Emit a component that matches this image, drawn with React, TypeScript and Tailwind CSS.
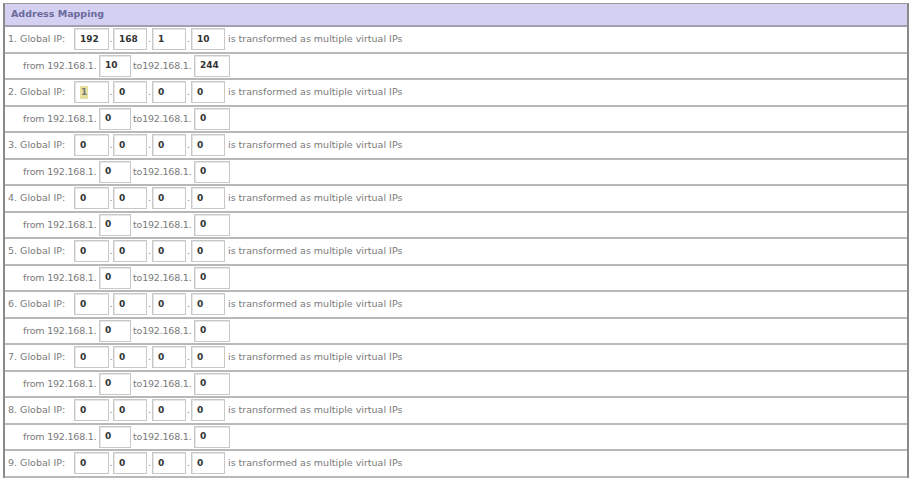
import React from "react";

const font = { fontFamily: '"DejaVu Sans", Verdana, sans-serif' };

function Box({ v, w, hl }: { v: string; w: number; hl?: boolean }) {
  return (
    <div
      className="shrink-0 h-[22px] border border-[#c8c8c8] bg-white shadow-[inset_1px_1px_0_#e6e6e6] flex items-center pl-[5px] text-[9px] font-bold text-[#333]"
      style={{ width: w }}
    >
      {hl ? <span className="bg-[#e8e0a0] text-[#777] px-[1px]">1</span> : v}
    </div>
  );
}

function GlobalRow({ n, vals, hl }: { n: number; vals: string[]; hl?: boolean }) {
  return (
    <div className="h-[26.5px] border-b-2 border-[#b8b8b8] flex items-center whitespace-nowrap pl-[3px] text-[9.5px] text-[#7a7a7a]">
      <span className="shrink-0 w-[66px]">{n}. Global IP:</span>
      <Box v={vals[0]} w={35} hl={hl} />
      <span className="shrink-0 w-[4px] text-center">.</span>
      <Box v={vals[1]} w={34} />
      <span className="shrink-0 w-[5px] text-center">.</span>
      <Box v={vals[2]} w={34} />
      <span className="shrink-0 w-[5px] text-center">.</span>
      <Box v={vals[3]} w={34} />
      <span className="ml-[3px]">is transformed as multiple virtual IPs</span>
    </div>
  );
}

function FromRow({ a, b }: { a: string; b: string }) {
  return (
    <div className="h-[26.5px] border-b-2 border-[#b8b8b8] flex items-center whitespace-nowrap pl-[18px] text-[9.5px] text-[#7a7a7a]">
      <span className="shrink-0 w-[76px] tracking-[-0.2px]">from 192.168.1.</span>
      <Box v={a} w={32} />
      <span className="shrink-0 w-[63px] pl-[2px] tracking-[-0.2px]">to192.168.1.</span>
      <Box v={b} w={36} />
    </div>
  );
}

export default function App() {
  const rows: { vals: string[]; a: string; b: string; hl?: boolean }[] = [
    { vals: ["192", "168", "1", "10"], a: "10", b: "244" },
    { vals: ["1", "0", "0", "0"], a: "0", b: "0", hl: true },
  ];
  for (let i = 0; i < 7; i++) rows.push({ vals: ["0", "0", "0", "0"], a: "0", b: "0" });
  return (
    <div className="w-[912px] h-[500px] bg-white overflow-hidden pt-[3px] pl-[3px]" style={font}>
      <div className="w-[906px] border-l-2 border-t border-r-2 border-l-[#8a8a8a] border-t-[#9a9a9a] border-r-[#8a8a8a]">
        <div className="h-[23px] bg-[#d4d0f2] border-b-2 border-[#a0a0b0] flex items-center pl-[6px] text-[9.5px] font-bold text-[#6a6a9a]">
          Address Mapping
        </div>
        {rows.map((r, i) => (
          <React.Fragment key={i}>
            <GlobalRow n={i + 1} vals={r.vals} hl={r.hl} />
            {i < 8 && <FromRow a={r.a} b={r.b} />}
          </React.Fragment>
        ))}
      </div>
    </div>
  );
}
